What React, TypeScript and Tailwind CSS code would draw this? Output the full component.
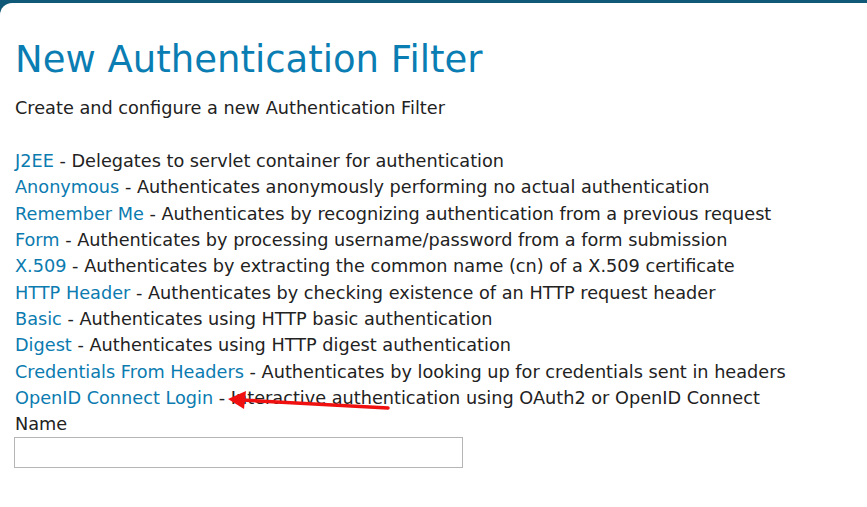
const filters = [
  ["J2EE", "Delegates to servlet container for authentication"],
  ["Anonymous", "Authenticates anonymously performing no actual authentication"],
  ["Remember Me", "Authenticates by recognizing authentication from a previous request"],
  ["Form", "Authenticates by processing username/password from a form submission"],
  ["X.509", "Authenticates by extracting the common name (cn) of a X.509 certificate"],
  ["HTTP Header", "Authenticates by checking existence of an HTTP request header"],
  ["Basic", "Authenticates using HTTP basic authentication"],
  ["Digest", "Authenticates using HTTP digest authentication"],
  ["Credentials From Headers", "Authenticates by looking up for credentials sent in headers"],
  ["OpenID Connect Login", "Interactive authentication using OAuth2 or OpenID Connect"],
];

export default function App() {
  return (
    <div className="w-[867px] h-[507px] bg-[#0f5877] pt-[3px] overflow-hidden font-['DejaVu_Sans',sans-serif]">
      <div className="relative h-full bg-white rounded-tl-[12px] pl-[15px] pt-[35px]">
        <h1 className="text-[37px] leading-[44px] text-[#0a7db3]">New Authentication Filter</h1>
        <p className="mt-[13px] text-[17.7px] leading-[26px] text-[#222]">
          Create and configure a new Authentication Filter
        </p>
        <ul className="mt-[27px] text-[17.7px] leading-[26.35px] text-[#222]">
          {filters.map(([name, desc]) => (
            <li key={name}>
              <a href="#" className="text-[#0b7bb0]">{name}</a> - {desc}
            </li>
          ))}
        </ul>
        <label className="block text-[17.7px] leading-[26px] text-[#222]">Name</label>
        <input className="-ml-px w-[449px] h-[31px] border border-[#b5b5b5] outline-none" />
        {/* red annotation arrow */}
        <svg className="absolute left-0 top-0 pointer-events-none" width="867" height="504">
          <line x1="388" y1="405" x2="242" y2="397" stroke="#f01010" strokeWidth="3.5" strokeLinecap="round" />
          <polygon points="228,396 246,388 244,406" fill="#f01010" />
        </svg>
      </div>
    </div>
  );
}
